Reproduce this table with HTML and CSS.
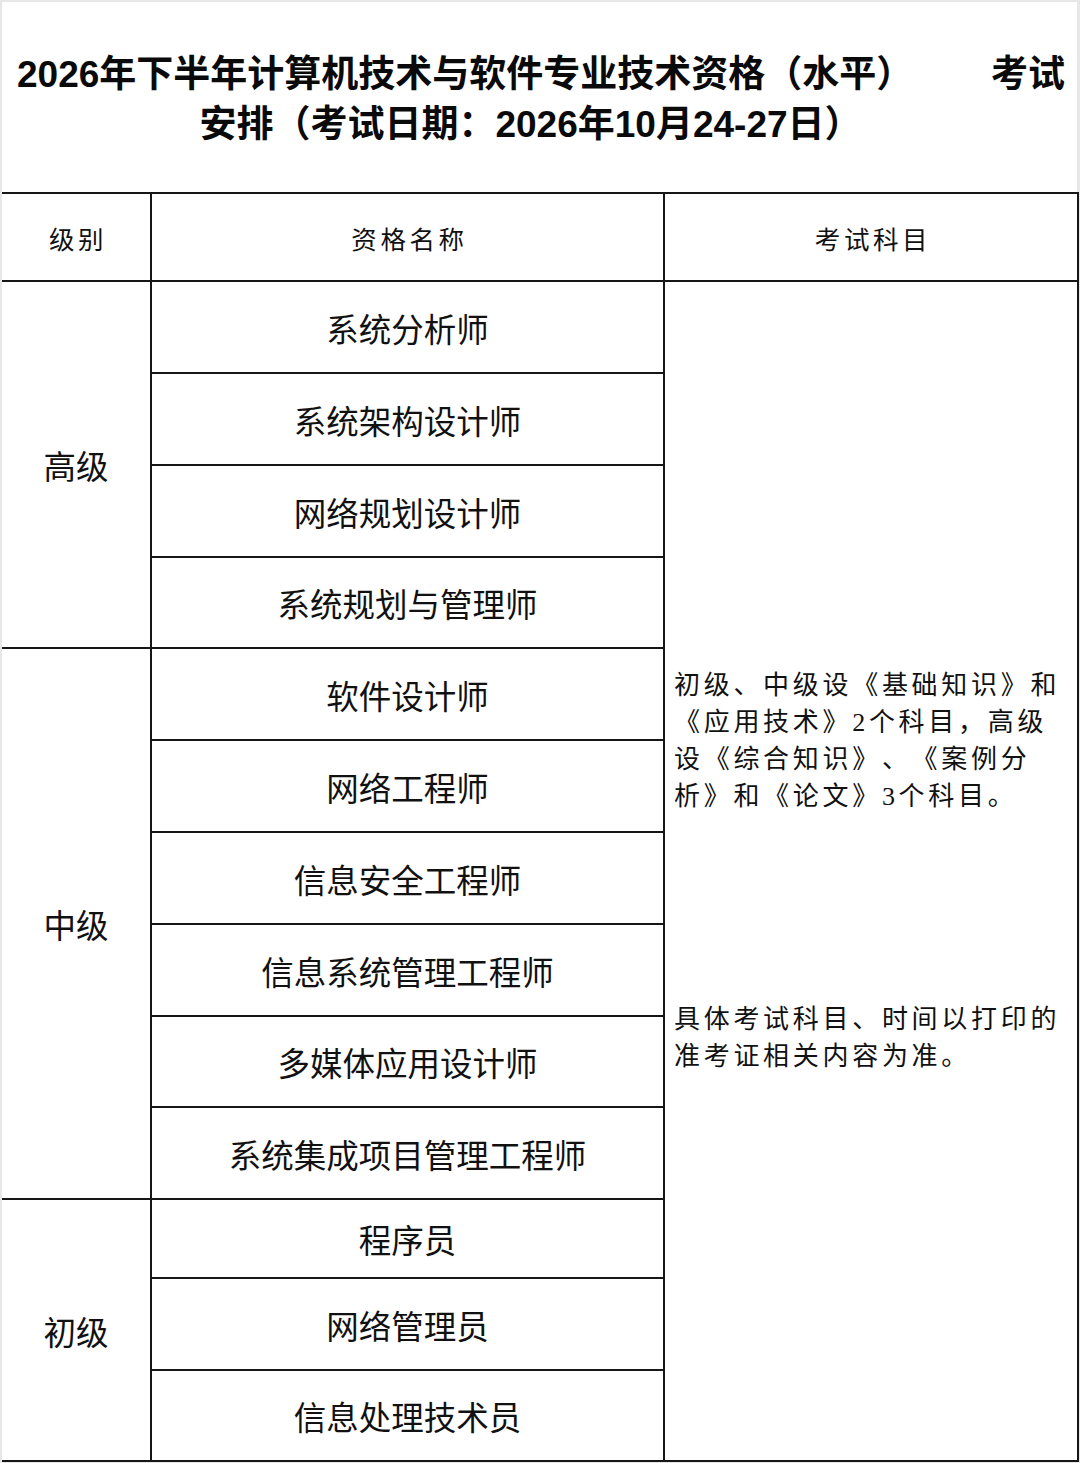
FILE: index.html
```html
<!DOCTYPE html>
<html lang="zh-CN">
<head>
<meta charset="utf-8">
<title>2026年下半年计算机技术与软件专业技术资格（水平）考试安排</title>
<link rel="stylesheet" href="styles.css">
</head>
<body>
<div class="sheet">
  <header class="title">
    <div class="title-line first"><span>2026年下半年计算机技术与软件专业技术资格（水平）</span><span>考试</span></div>
    <div class="title-line second">安排（考试日期：2026年10月24-27日）</div>
  </header>
  <div class="grid">
    <div class="cell head c1">级别</div>
    <div class="cell head c2">资格名称</div>
    <div class="cell head c3">考试科目</div>

    <div class="cell level lv-high">高级</div>
    <div class="cell name r2">系统分析师</div>
    <div class="cell name r3">系统架构设计师</div>
    <div class="cell name r4">网络规划设计师</div>
    <div class="cell name r5">系统规划与管理师</div>

    <div class="cell level lv-mid">中级</div>
    <div class="cell name r6">软件设计师</div>
    <div class="cell name r7">网络工程师</div>
    <div class="cell name r8">信息安全工程师</div>
    <div class="cell name r9">信息系统管理工程师</div>
    <div class="cell name r10">多媒体应用设计师</div>
    <div class="cell name r11">系统集成项目管理工程师</div>

    <div class="cell level lv-low">初级</div>
    <div class="cell name r12">程序员</div>
    <div class="cell name r13">网络管理员</div>
    <div class="cell name r14">信息处理技术员</div>

    <div class="cell subjects">
      <p>初级、中级设《基础知识》和<br>《应用技术》2个科目，高级<br>设《综合知识》、《案例分<br>析》和《论文》3个科目。</p>
      <p>具体考试科目、时间以打印的<br>准考证相关内容为准。</p>
    </div>
  </div>
</div>
</body>
</html>
```

FILE: styles.css
```css
html, body {
  margin: 0;
  padding: 0;
}

body {
  background: #e7e7e7;
  width: 1080px;
  height: 1463px;
  overflow: hidden;
  text-spacing-trim: space-all;
}

.sheet {
  margin: 2px 0 0 2px;
  width: 1077px;
  background: #ffffff;
}

.title {
  box-sizing: border-box;
  height: 190px;
  padding-top: 6px;
  display: flex;
  flex-direction: column;
  justify-content: center;
  font-family: "Liberation Sans", "Noto Sans CJK SC", sans-serif;
  font-weight: 700;
  font-size: 37px;
  line-height: 50px;
  color: #0a0a0a;
  border-right: 2px solid #e7e7e7;
}

.title-line {
  white-space: nowrap;
}

.title-line.first {
  display: flex;
  justify-content: space-between;
  padding: 0 12px 0 15px;
}

.title-line.second {
  text-align: center;
  padding-right: 18px;
}

.grid {
  display: grid;
  grid-template-columns: 148px 511px 412px;
  grid-template-rows: 86px 90px 90px 90px 89px 90px 90px 90px 90px 89px 90px 77px 90px 89px;
  gap: 2px;
  padding: 2px 2px 2px 0;
  background: #161616;
  width: 1075px;
}

.cell {
  background: #ffffff;
  display: flex;
  align-items: center;
  justify-content: center;
  color: #111111;
}

.head {
  font-family: "Liberation Serif", "Noto Sans CJK SC", serif;
  font-size: 25.5px;
  letter-spacing: 3.6px;
  padding-left: 4px;
  grid-row: 1;
}

.c1 { grid-column: 1; }
.c2 { grid-column: 2; }
.c3 { grid-column: 3; }

.level,
.name {
  font-family: "Noto Sans CJK SC", sans-serif;
  font-size: 32.5px;
}

.level { grid-column: 1; }
.lv-high { grid-row: 2 / 6; }
.lv-mid { grid-row: 6 / 12; }
.lv-low { grid-row: 12 / 15; }

.name { grid-column: 2; }
.r2 { grid-row: 2; }
.r3 { grid-row: 3; }
.r4 { grid-row: 4; }
.r5 { grid-row: 5; }
.r6 { grid-row: 6; }
.r7 { grid-row: 7; }
.r8 { grid-row: 8; }
.r9 { grid-row: 9; }
.r10 { grid-row: 10; }
.r11 { grid-row: 11; }
.r12 { grid-row: 12; }
.r13 { grid-row: 13; }
.r14 { grid-row: 14; }

.subjects {
  grid-column: 3;
  grid-row: 2 / 15;
  flex-direction: column;
  align-items: flex-start;
  justify-content: center;
  gap: 186px;
  padding-left: 9px;
  font-family: "Liberation Serif", "Noto Sans CJK SC", serif;
  font-size: 26px;
  letter-spacing: 3.7px;
  line-height: 37px;
}

.subjects p {
  margin: 0;
  white-space: nowrap;
}
```
